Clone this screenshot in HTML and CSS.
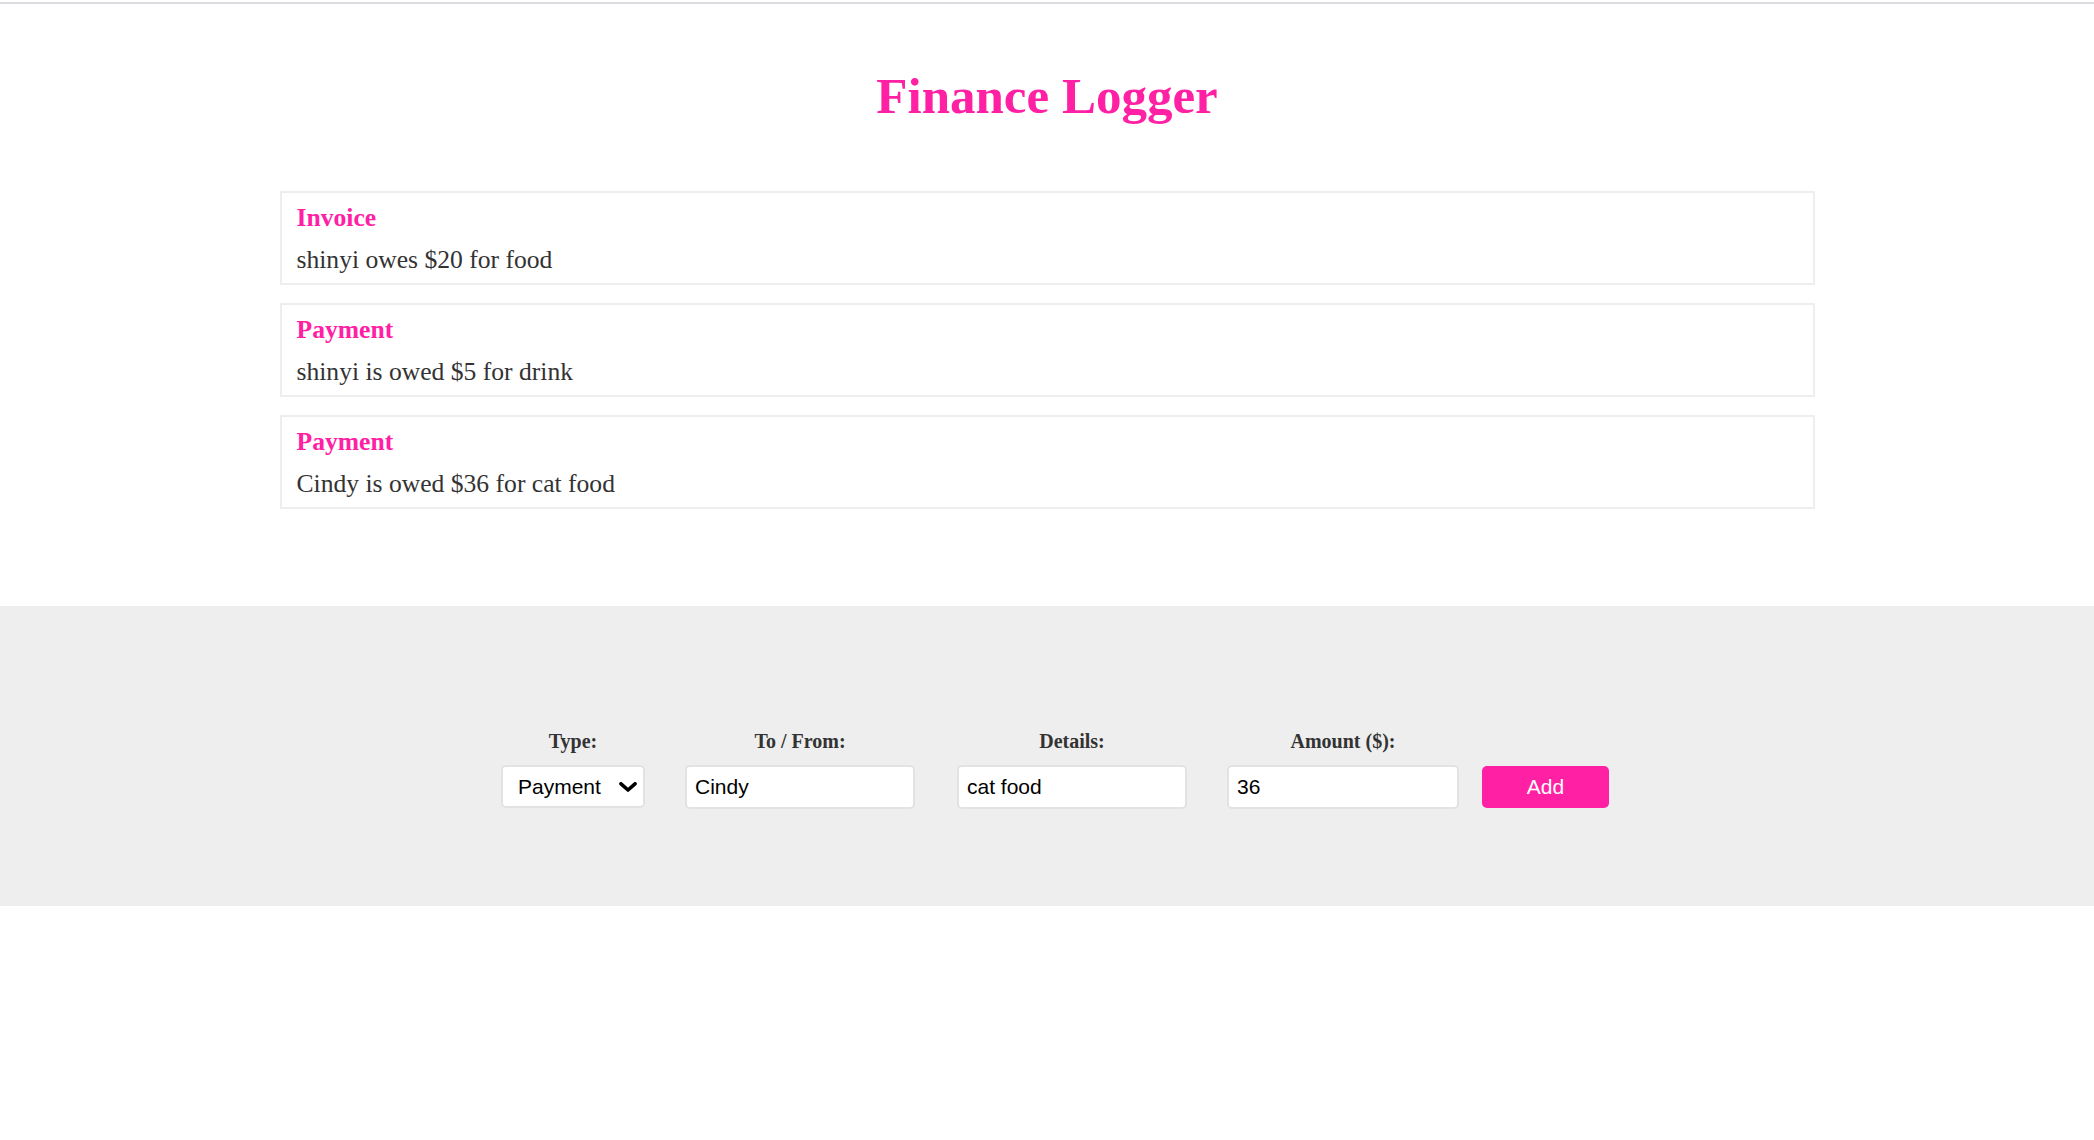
FILE: index.html
```html
<!DOCTYPE html>
<html lang="en">
<head>
<meta charset="utf-8">
<title>Finance Logger</title>
<link rel="stylesheet" href="styles.css">
</head>
<body>
<div class="top-rule"></div>
<header class="page-header">
  <h1 class="title">Finance Logger</h1>
</header>
<main class="wrapper">
  <ul class="item-list">
    <li class="item">
      <h4 class="item-type">Invoice</h4>
      <p class="item-text">shinyi owes $20 for food</p>
    </li>
    <li class="item">
      <h4 class="item-type">Payment</h4>
      <p class="item-text">shinyi is owed $5 for drink</p>
    </li>
    <li class="item">
      <h4 class="item-type">Payment</h4>
      <p class="item-text">Cindy is owed $36 for cat food</p>
    </li>
  </ul>
</main>
<footer class="form-band">
  <form class="new-item-form">
    <div class="field field-type">
      <label class="field-label" for="type">Type:</label>
      <div class="select-wrap">
        <select id="type" class="field-select">
          <option value="invoice">Invoice</option>
          <option value="payment" selected>Payment</option>
        </select>
        <svg class="chevron" width="18" height="10" viewBox="0 0 18 10" aria-hidden="true"><polyline points="2,1.8 9,8 16,1.8" fill="none" stroke="#000" stroke-width="3.6" stroke-linecap="round" stroke-linejoin="round"/></svg>
      </div>
    </div>
    <div class="field field-tofrom">
      <label class="field-label" for="tofrom">To / From:</label>
      <input id="tofrom" class="field-input" type="text" value="Cindy">
    </div>
    <div class="field field-details">
      <label class="field-label" for="details">Details:</label>
      <input id="details" class="field-input" type="text" value="cat food">
    </div>
    <div class="field field-amount">
      <label class="field-label" for="amount">Amount ($):</label>
      <input id="amount" class="field-input" type="text" value="36">
    </div>
    <button class="add-btn" type="button">Add</button>
  </form>
</footer>
</body>
</html>
```

FILE: styles.css
```css
html, body {
  margin: 0;
  padding: 0;
  background: #fff;
}

body {
  font-family: "Liberation Serif", "Times New Roman", serif;
  color: #333;
}

.top-rule {
  margin-top: 2px;
  height: 2px;
  background: #dcdbe0;
}

.page-header {
  padding-top: 62px;
}

.title {
  margin: 0;
  text-align: center;
  font-size: 51px;
  line-height: 60px;
  font-weight: bold;
  color: #ff20a4;
}

.wrapper {
  max-width: 1535px;
  margin: 0 auto;
  padding-top: 65px;
  padding-bottom: 97px;
}

.item-list {
  list-style: none;
  margin: 0;
  padding: 0;
  display: flex;
  flex-direction: column;
  gap: 18px;
}

.item {
  border: 2px solid #eee;
  padding: 9.5px 15px 8.5px;
  display: flex;
  flex-direction: column;
  gap: 12px;
}

.item-type {
  margin: 0;
  font-size: 25.6px;
  line-height: 30px;
  font-weight: bold;
  color: #ff20a4;
}

.item-text {
  margin: 0;
  font-size: 25.6px;
  line-height: 30px;
  color: #333;
}

.form-band {
  background: #eee;
  padding: 123px 0 97px;
}

.new-item-form {
  display: flex;
  justify-content: center;
  align-items: flex-end;
  padding-left: 16px;
}

.field {
  display: flex;
  flex-direction: column;
  align-items: center;
  gap: 12px;
}

.field-type { margin-right: 40px; }
.field-tofrom { margin-right: 42px; }
.field-details { margin-right: 40px; }
.field-amount { margin-right: 23px; }

.field-label {
  font-family: "Liberation Serif", "Times New Roman", serif;
  font-weight: bold;
  font-size: 20px;
  line-height: 24px;
  color: #333;
}

.select-wrap {
  position: relative;
  margin-bottom: 1px;
}

.field-select {
  -webkit-appearance: none;
  appearance: none;
  box-sizing: border-box;
  width: 144px;
  height: 43px;
  margin: 0;
  padding: 0 0 0 15px;
  border: 2px solid #e2e2e2;
  border-radius: 5px;
  background: #fff;
  font-family: "Liberation Sans", Arial, sans-serif;
  font-size: 21px;
  color: #000;
  display: block;
}

.chevron {
  position: absolute;
  right: 8px;
  top: 17px;
  pointer-events: none;
}

.field-input {
  box-sizing: border-box;
  height: 44px;
  margin: 0;
  padding: 0 8px;
  border: 2px solid #e2e2e2;
  border-radius: 5px;
  background: #fff;
  font-family: "Liberation Sans", Arial, sans-serif;
  font-size: 21px;
  color: #000;
  outline: none;
}

.field-tofrom .field-input,
.field-details .field-input { width: 230px; }
.field-amount .field-input { width: 232px; }

.add-btn {
  box-sizing: border-box;
  width: 127px;
  height: 42px;
  margin: 0 0 1px;
  border: none;
  border-radius: 5px;
  background: #ff20a4;
  color: #fff;
  font-family: "Liberation Sans", Arial, sans-serif;
  font-size: 21px;
  cursor: pointer;
}
```
